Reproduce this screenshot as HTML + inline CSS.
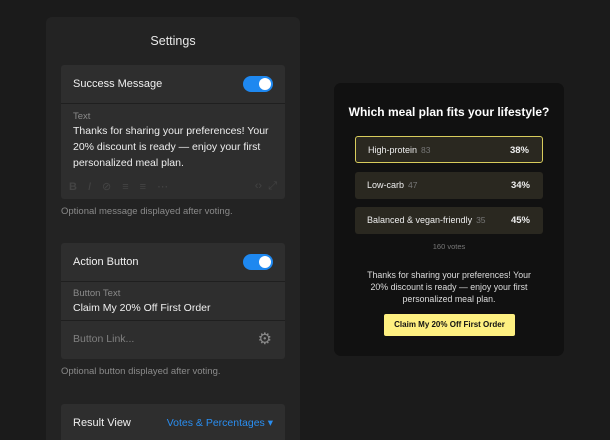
<!DOCTYPE html>
<html><head><style>
*{margin:0;padding:0;box-sizing:border-box}
html,body{width:610px;height:440px;overflow:hidden}
body{background:#1b1b1b;font-family:"Liberation Sans",sans-serif;position:relative;color:#eee}
.panel{position:absolute;left:46px;top:17px;width:254px;height:423px;background:#232323;border-radius:6px 6px 0 0;overflow:hidden}
.title{position:absolute;top:17px;left:0;width:100%;text-align:center;font-size:12.5px;color:#e8e8e8}
.card{position:absolute;left:15px;width:224px;background:#2e2e2e;border-radius:3px;overflow:hidden}
.row{position:relative;border-bottom:1px solid #1f1f1f}
.lbl{position:absolute;left:12px;font-size:11px;color:#f0f0f0}
.tog{position:absolute;right:12px;width:30px;height:16px;border-radius:8px;background:#1e88f0}
.tog:after{content:"";position:absolute;right:2px;top:2px;width:12px;height:12px;border-radius:6px;background:#fff}
.small{position:absolute;left:12px;font-size:9.5px;color:#8a8a8a}
.help{position:absolute;left:15px;font-size:9.5px;color:#8a8a8a}
.prev{position:absolute;left:334px;top:83px;width:230px;height:273px;background:#111;border-radius:7px}
.opt{position:absolute;left:21px;width:188px;height:27px;background:#2a2820;border-radius:3px;font-size:9px;color:#eee}
.opt span.n{color:#777;margin-left:4px;font-size:8.5px}
.opt .t{position:absolute;left:12px;top:8px}
.opt .p{position:absolute;right:13px;top:8px;font-weight:bold;font-size:9.5px}
</style></head><body>
<div class="panel">
 <div class="title">Settings</div>
 <div class="card" style="top:48px;height:134px">
  <div class="row" style="height:39px"><div class="lbl" style="top:13px">Success Message</div><div class="tog" style="top:11px"></div></div>
  <div class="small" style="top:46px">Text</div>
  <div style="position:absolute;left:12px;top:58px;width:205px;font-size:10.5px;line-height:16px;color:#eee">Thanks for sharing your preferences! Your 20% discount is ready — enjoy your first personalized meal plan.</div>
  <div style="position:absolute;left:8px;top:115px;font-size:11px;color:#444;letter-spacing:11px;white-space:nowrap"><b>B</b><i>I</i>⊘≡≡⋯</div>
  <div style="position:absolute;right:8px;top:115px;font-size:11px;color:#444">‹›&nbsp;&nbsp;⤢</div>
 </div>
 <div class="help" style="top:189px">Optional message displayed after voting.</div>
 <div class="card" style="top:226px;height:116px">
  <div class="row" style="height:39px"><div class="lbl" style="top:13px">Action Button</div><div class="tog" style="top:11px"></div></div>
  <div class="row" style="height:39px"><div class="small" style="top:6px">Button Text</div><div class="lbl" style="top:20px;font-size:10.5px">Claim My 20% Off First Order</div></div>
  <div class="small" style="top:90px;font-size:10.5px;color:#808080">Button Link...</div>
  <div style="position:absolute;right:13px;top:86px;font-size:16px;color:#888">⚙</div>
 </div>
 <div class="help" style="top:349px">Optional button displayed after voting.</div>
 <div class="card" style="top:387px;height:36px;border-radius:3px 3px 0 0">
  <div class="lbl" style="top:13px">Result View</div>
  <div style="position:absolute;right:12px;top:13px;font-size:10.5px;color:#2a8ef0">Votes &amp; Percentages ▾</div>
 </div>
</div>
<div class="prev">
 <div style="position:absolute;top:22px;width:100%;text-align:center;font-size:12px;font-weight:bold;color:#fff">Which meal plan fits your lifestyle?</div>
 <div class="opt" style="top:53px;border:1px solid #d8cc5c"><span class="t">High-protein<span class="n">83</span></span><span class="p">38%</span></div>
 <div class="opt" style="top:89px"><span class="t">Low-carb<span class="n">47</span></span><span class="p">34%</span></div>
 <div class="opt" style="top:124px"><span class="t">Balanced &amp; vegan-friendly<span class="n">35</span></span><span class="p">45%</span></div>
 <div style="position:absolute;top:159px;width:100%;text-align:center;font-size:7.5px;color:#777">160 votes</div>
 <div style="position:absolute;top:186px;left:28px;width:174px;text-align:center;font-size:8.8px;line-height:12px;color:#ddd">Thanks for sharing your preferences! Your 20% discount is ready — enjoy your first personalized meal plan.</div>
 <div style="position:absolute;left:50px;top:231px;width:131px;height:22px;background:#fef081;border-radius:2px;text-align:center;line-height:22px;font-size:8px;font-weight:bold;color:#111">Claim My 20% Off First Order</div>
</div>
</body></html>
